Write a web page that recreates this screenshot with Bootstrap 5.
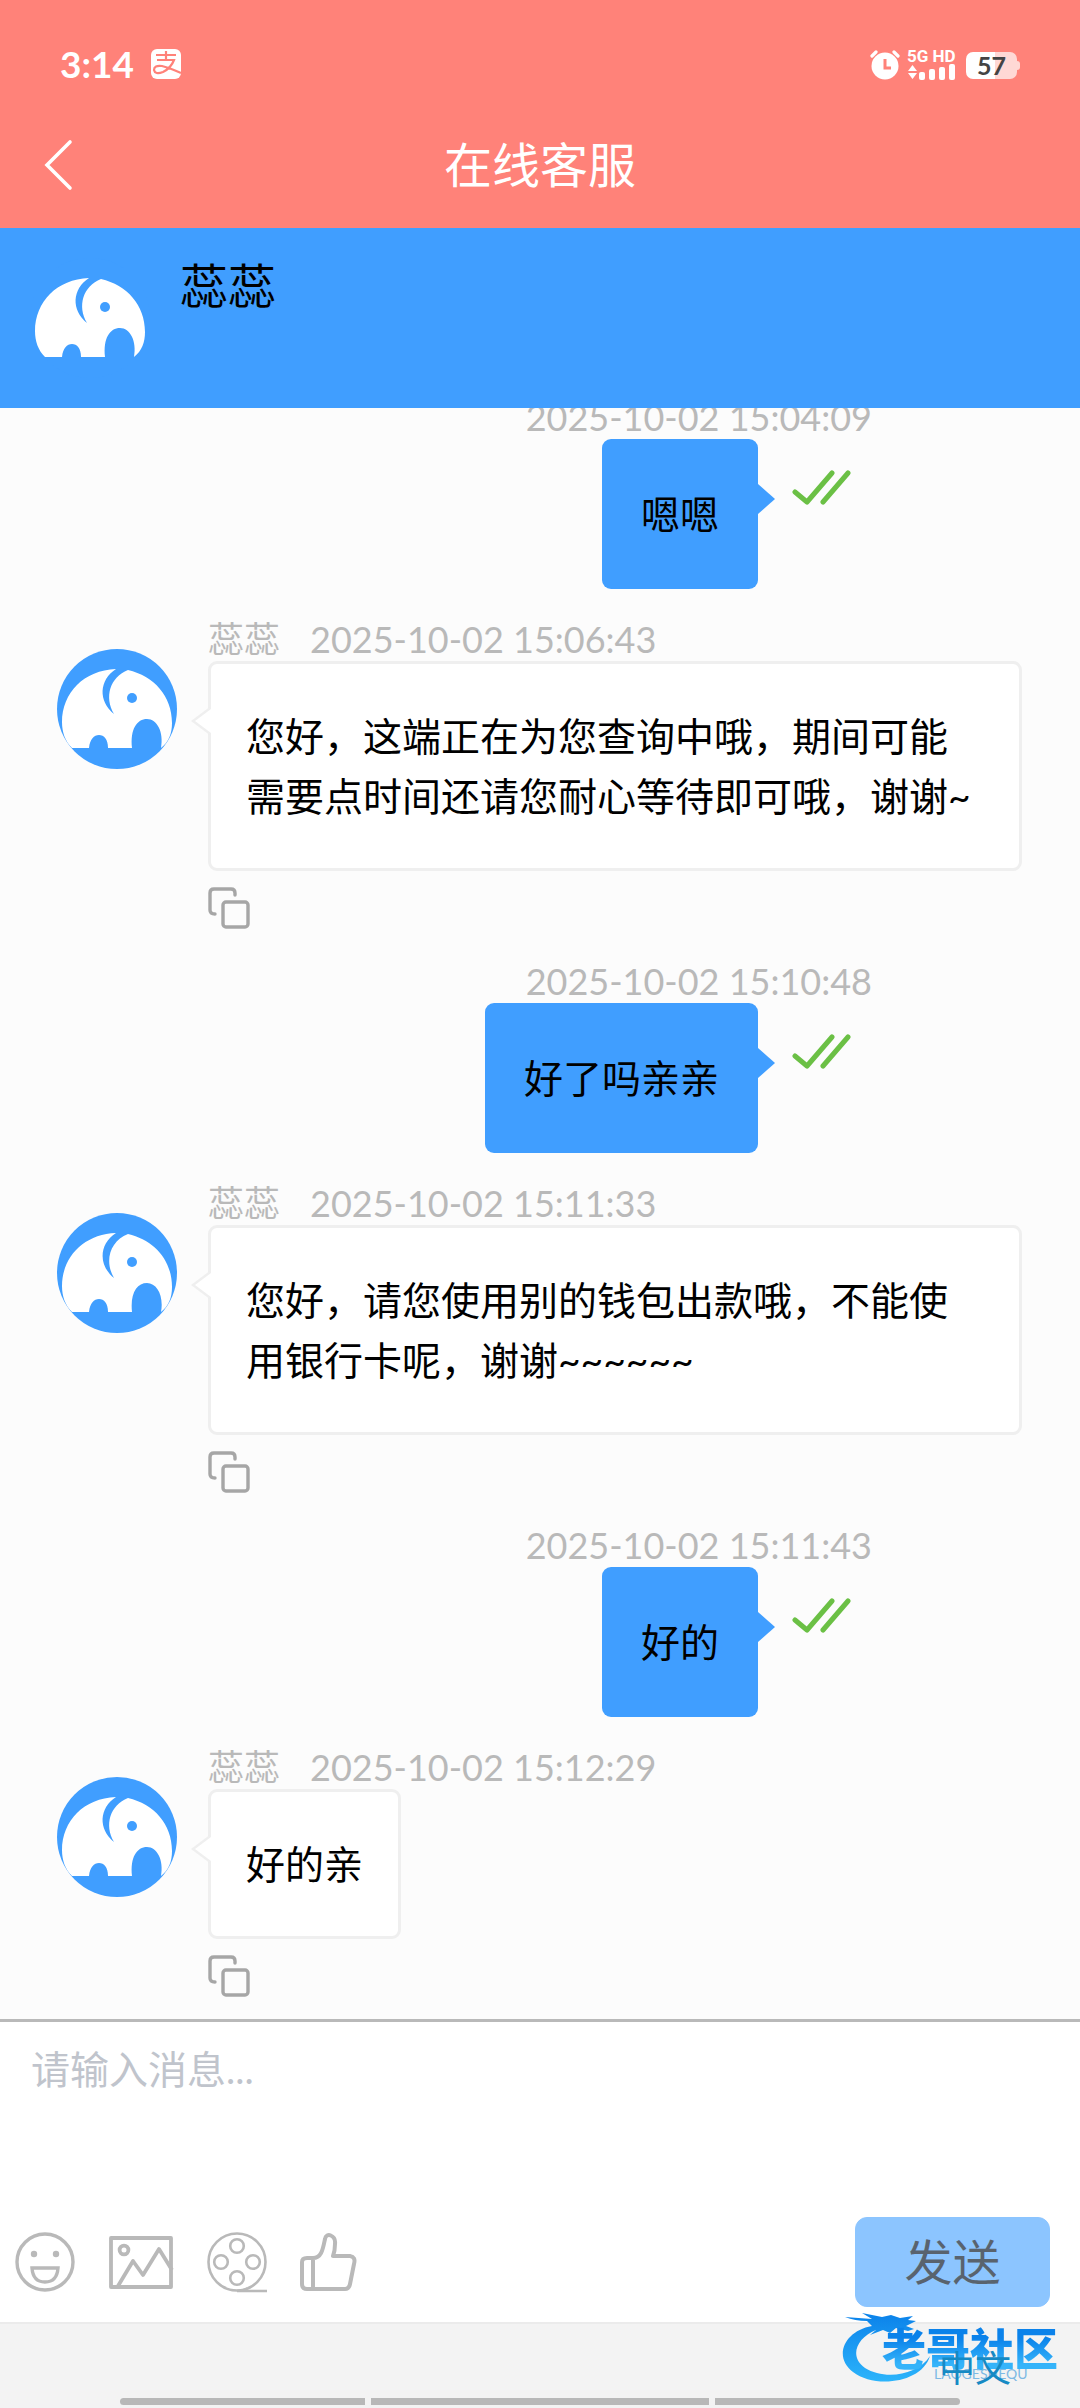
<!DOCTYPE html>
<html lang="zh-CN">
<head>
<meta charset="utf-8">
<meta name="viewport" content="width=device-width, initial-scale=1">
<title>在线客服</title>
<link href="https://cdn.jsdelivr.net/npm/bootstrap@5.3.0/dist/css/bootstrap.min.css" rel="stylesheet">
<style>
:root{--coral:#ff8279;--sky:#409eff;--muted:#b9b9b9}
body{height:100vh;background:#f3f3f3;color:#000;font-family:Lato,"Noto Sans CJK SC",sans-serif;font-size:39px;line-height:60px}
svg{display:block;flex:none}
.top-area{background:var(--coral)}
.status-row{height:108px;padding:48px 63px 0 60px}
.clock{font-size:37px;line-height:32px}
.status-icons{gap:7px}
.signal{width:48px}
.signal-label{font-size:17px;line-height:16px;font-family:Roboto,sans-serif}
.battery{width:51px;height:27px;border-radius:7px;background:linear-gradient(90deg,#fff 57%,#ffd8d5 57%);color:#444;font-size:25px;line-height:27px;position:relative}
.battery::after{content:"";position:absolute;right:-3px;top:9px;width:3px;height:9px;border-radius:0 3px 3px 0;background:#ffd8d5}
.title-row{height:120px;padding:27px 36px 0}
.title-row h1{font-size:48px;line-height:60px}
.side-slot{width:48px}
.agent-bar{background:var(--sky);height:180px;padding:30px;gap:30px}
.agent-name{font-size:48px;line-height:56px}
.chat-log{flex:1 1 0;min-height:0;background:#fcfcfc;padding-bottom:22px}
.stamp{font-size:36px;line-height:44px;color:var(--muted)}
.msg-in{padding:0 58px 0 57px;margin-bottom:30px;gap:31px}
.msg-in:last-child{margin-bottom:0}
.msg-in .avatar{margin-top:32px}
.stamp-in{gap:30px}
.bubble{position:relative;border-radius:9px;padding:42px 35px}
.bubble-in{background:#fff;border:3px solid #efefef}
.bubble-in::before,.bubble-in::after{content:"";position:absolute;right:100%;top:42px;border:solid transparent;border-width:15px 20px 15px 0;border-right-color:#efefef}
.bubble-in::after{top:45px;border-width:12px 16px 12px 0;border-right-color:#fff}
.msg-out{padding-right:208px;margin-bottom:28px}
.bubble-out{background:var(--sky);padding:45px 39px}
.bubble-out::after{content:"";position:absolute;left:100%;top:45px;border:solid transparent;border-width:15px 0 15px 17px;border-left-color:var(--sky)}
.out-line{padding-right:21px;gap:34px}
.out-line svg{margin-top:31px}
.copy-btn{margin-top:16px}
.composer{background:#fff;border-top:3px solid var(--muted)}
.composer textarea{height:195px;padding:17px 31px;font-size:39px;line-height:60px;resize:none;background:#fff}
.composer textarea::placeholder{color:#c0c4cc;opacity:1}
.tools{padding:0 30px 15px 15px}
.tool-set{gap:33px}
.send-btn{--bs-btn-bg:#8cc5ff;--bs-btn-border-color:#8cc5ff;--bs-btn-color:#59636e;--bs-btn-hover-bg:#79bbff;width:195px;height:90px;border-radius:12px;font-size:48px;line-height:60px;padding:12px}
.foot-strip{height:86px;border-top:2px solid #ebebeb;position:relative}
.lang-link{position:absolute;right:69px;top:20px;font-size:36px;line-height:48px;color:#168ac4}
.community{position:absolute;right:14px;top:-11px}
.community-name{position:absolute;left:40px;top:14px;font-size:44px;line-height:44px;font-weight:900;white-space:nowrap;background:linear-gradient(#0b82ea 25%,#35b4fa 85%);-webkit-background-clip:text;background-clip:text;color:transparent}
.community-latin{position:absolute;left:92px;top:53px;font-size:14px;line-height:16px;color:#7db9e4}
.gesture{position:absolute;left:0;right:0;bottom:3px;padding:0 120px;gap:6px}
.gesture span{height:7px;background:#b8b8b8;flex:245 1 0}
.gesture .mid{flex-grow:338}
</style>
</head>
<body class="d-flex flex-column overflow-hidden">
<svg width="0" height="0" class="position-absolute" aria-hidden="true">
<symbol id="elephant" viewBox="0 0 120 120">
<circle cx="60" cy="60" r="60" fill="#409eff"/>
<path fill="#fff" d="M15 99C8 92 5 83 5 73C5 44 27 21 59 20C42 31 41 52 57 65C47 48 53 28 71 21C97 27 115 47 115 74C115 84 112 93 104 99C107 83 100 70 90 70C80 70 73 80 75 99H51C51 90 47 86 42 86C37 86 33 90 32 99Z"/>
<circle cx="75" cy="49" r="5" fill="#409eff"/>
</symbol>
<symbol id="copy" viewBox="0 0 42 42"><g fill="none" stroke="#a6a6a6" stroke-width="3.4" stroke-linecap="round"><path d="M27 8V6Q27 2 23 2H6Q2 2 2 6V23Q2 27 7 27"/><rect x="15" y="15" width="25" height="25" rx="3"/></g></symbol>
<symbol id="ticks" viewBox="0 0 59 36"><path fill="none" stroke="#6bc045" stroke-width="5" stroke-linecap="round" stroke-linejoin="round" d="M3 22L15 32L40 3M31 32L56 3"/></symbol>
</svg>

<header class="top-area text-white">
<div class="status-row d-flex justify-content-between">
<div class="d-flex gap-3"><span class="clock fw-bold">3:14</span>
<svg width="32" height="32" viewBox="0 0 32 32"><rect x="1" y="1" width="30" height="30" rx="6" fill="#fff"/><path d="M6 7H26M16 3V12M7 12H24Q21 20 13 24Q5 27 4 22Q4 17 12 18Q20 20 31 25" fill="none" stroke="#ff8279" stroke-width="2.2"/></svg></div>
<div class="status-icons d-flex">
<svg width="30" height="32" viewBox="0 0 30 32"><circle cx="15" cy="18" r="13.500" fill="#fff"/><path d="M2 8L6 4M28 8L24 4" stroke="#fff" stroke-width="3.200" stroke-linecap="round"/><path d="M15 11V20H21" fill="none" stroke="#ff8279" stroke-width="3"/></svg>
<div class="signal"><div class="signal-label fw-bold text-nowrap">5G HD</div>
<svg width="48" height="16" viewBox="0 0 48 16" fill="#fff"><path d="M1 7L5.500 1L10 7ZM1 9H10L5.500 15Z"/><rect x="12" y="8" width="6" height="8" rx="2"/><rect x="22" y="5" width="6" height="11" rx="2"/><rect x="32" y="3" width="6" height="13" rx="2"/><rect x="42" width="6" height="16" rx="2"/></svg></div>
<div class="battery fw-bold text-center mt-1 ms-1">57</div>
</div>
</div>
<div class="title-row d-flex justify-content-between">
<button class="side-slot btn p-0 border-0 d-flex" aria-label="返回"><svg width="48" height="60" viewBox="0 0 48 60"><polyline points="34,7 11,30 34,53" fill="none" stroke="#fff" stroke-width="3.600" stroke-linecap="round"/></svg></button>
<h1 class="m-0 fw-normal">在线客服</h1>
<span class="side-slot"></span>
</div>
</header>

<section class="agent-bar d-flex">
<svg width="120" height="120" role="img" aria-label="客服头像"><use href="#elephant"/></svg>
<div class="agent-name">蕊蕊</div>
</section>

<main class="chat-log d-flex flex-column justify-content-end overflow-hidden">
<article class="msg-out d-flex flex-column align-items-end flex-shrink-0">
<div class="stamp">2025-10-02 15:04:09</div>
<div class="out-line d-flex align-items-start"><div class="bubble bubble-out">嗯嗯</div><svg width="59" height="36"><use href="#ticks"/></svg></div>
</article>
<article class="msg-in d-flex align-items-start flex-shrink-0">
<svg class="avatar" width="120" height="120"><use href="#elephant"/></svg>
<div class="d-flex flex-column align-items-start">
<div class="stamp stamp-in d-flex"><span>蕊蕊</span><span>2025-10-02 15:06:43</span></div>
<div class="bubble bubble-in">您好，这端正在为您查询中哦，期间可能需要点时间还请您耐心等待即可哦，谢谢~</div>
<button class="copy-btn btn p-0 border-0" aria-label="复制"><svg width="42" height="42"><use href="#copy"/></svg></button>
</div>
</article>
<article class="msg-out d-flex flex-column align-items-end flex-shrink-0">
<div class="stamp">2025-10-02 15:10:48</div>
<div class="out-line d-flex align-items-start"><div class="bubble bubble-out">好了吗亲亲</div><svg width="59" height="36"><use href="#ticks"/></svg></div>
</article>
<article class="msg-in d-flex align-items-start flex-shrink-0">
<svg class="avatar" width="120" height="120"><use href="#elephant"/></svg>
<div class="d-flex flex-column align-items-start">
<div class="stamp stamp-in d-flex"><span>蕊蕊</span><span>2025-10-02 15:11:33</span></div>
<div class="bubble bubble-in">您好，请您使用别的钱包出款哦，不能使用银行卡呢，谢谢~~~~~~</div>
<button class="copy-btn btn p-0 border-0" aria-label="复制"><svg width="42" height="42"><use href="#copy"/></svg></button>
</div>
</article>
<article class="msg-out d-flex flex-column align-items-end flex-shrink-0">
<div class="stamp">2025-10-02 15:11:43</div>
<div class="out-line d-flex align-items-start"><div class="bubble bubble-out">好的</div><svg width="59" height="36"><use href="#ticks"/></svg></div>
</article>
<article class="msg-in d-flex align-items-start flex-shrink-0">
<svg class="avatar" width="120" height="120"><use href="#elephant"/></svg>
<div class="d-flex flex-column align-items-start">
<div class="stamp stamp-in d-flex"><span>蕊蕊</span><span>2025-10-02 15:12:29</span></div>
<div class="bubble bubble-in">好的亲</div>
<button class="copy-btn btn p-0 border-0" aria-label="复制"><svg width="42" height="42"><use href="#copy"/></svg></button>
</div>
</article>
</main>

<form class="composer">
<label class="visually-hidden" for="draft">消息</label>
<textarea id="draft" class="form-control border-0 rounded-0 shadow-none" placeholder="请输入消息..."></textarea>
<div class="tools d-flex align-items-center justify-content-between">
<div class="tool-set d-flex align-items-center">
<button type="button" class="btn p-0 border-0" aria-label="表情"><svg width="60" height="62" viewBox="0 0 60 62" fill="none" stroke="#b9b9b9" stroke-width="3.400"><circle cx="30" cy="31" r="28"/><path d="M17 37H43Q42 51 30 51Q18 51 17 37Z"/><g fill="#b9b9b9" stroke="none"><circle cx="19" cy="23" r="3.200"/><circle cx="41" cy="23" r="3.200"/></g></svg></button>
<button type="button" class="btn p-0 border-0" aria-label="图片"><svg width="66" height="62" viewBox="0 0 66 62" fill="none" stroke="#b9b9b9" stroke-width="3.800" stroke-linejoin="round"><rect x="3" y="7" width="60" height="49"/><circle cx="16" cy="19" r="4.400"/><path d="M10 55L25 30L35 44L51 18L64 39"/></svg></button>
<button type="button" class="btn p-0 border-0" aria-label="视频"><svg width="60" height="62" viewBox="0 0 60 62" fill="none" stroke="#b9b9b9" stroke-width="2.600"><circle cx="30" cy="31" r="28.500"/><circle cx="30" cy="15" r="6.800"/><circle cx="14" cy="31" r="6.800"/><circle cx="46" cy="31" r="6.800"/><circle cx="30" cy="47" r="6.800"/><path d="M30 60Q36 60 41 57M30 60H60"/></svg></button>
<button type="button" class="btn p-0 border-0" aria-label="点赞"><svg width="58" height="62" viewBox="0 0 58 62" fill="none" stroke="#b9b9b9" stroke-width="4" stroke-linejoin="round"><path d="M13 27C22 27 23 17 25 8C26 1 36 4 35 13Q35 20 33 25H50Q56 26 54 33L50 53Q49 58 45 58H7Q2 58 2 53V31Q2 27 7 27ZM13 27V58"/></svg></button>
</div>
<button type="submit" class="btn send-btn">发送</button>
</div>
</form>

<footer class="foot-strip">
<div class="community" aria-hidden="true">
<svg width="224" height="72" viewBox="0 0 224 72"><defs><linearGradient id="swirl" x1="0" y1="0" x2="0" y2="1"><stop offset="0" stop-color="#0b82ea"/><stop offset="1" stop-color="#2cb4fb"/></linearGradient></defs><path fill="url(#swirl)" d="M30 13C2 18-9 44 11 59C33 76 80 70 88 43C75 63 42 67 23 55C7 44 14 25 34 17L28 22L41 17L48 20L54 15L66 18L72 16L64 13L74 8L66 7L71 3L58 5L49 2L40 4L20 0L30 6L3 4Q13 8 25 8Z"/></svg>
<span class="community-name">老哥社区</span>
<span class="community-latin">LAOGESHEQU</span>
</div>
<a class="lang-link text-decoration-none" href="#">中文</a>
<div class="gesture d-flex"><span class="rounded-start-pill"></span><span class="mid"></span><span class="rounded-end-pill"></span></div>
</footer>
<script src="https://cdn.jsdelivr.net/npm/bootstrap@5.3.0/dist/js/bootstrap.bundle.min.js"></script>
</body>
</html>
